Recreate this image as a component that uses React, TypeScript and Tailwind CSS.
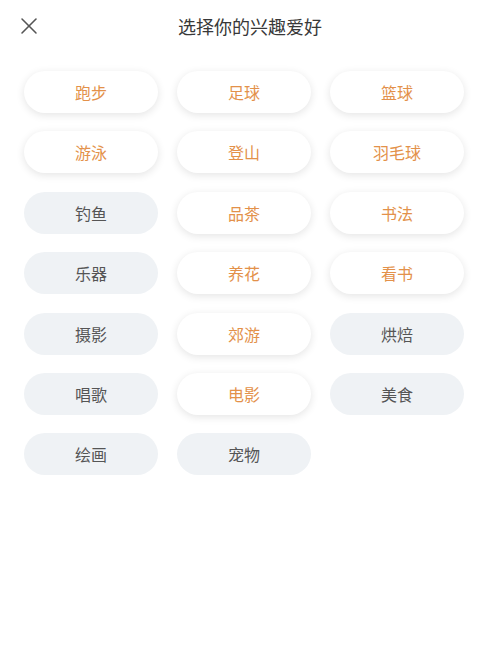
import { X } from 'lucide-react'

type Hobby = { name: string; selected: boolean }

const HOBBIES: Hobby[] = [
  { name: '跑步', selected: true },
  { name: '足球', selected: true },
  { name: '篮球', selected: true },
  { name: '游泳', selected: true },
  { name: '登山', selected: true },
  { name: '羽毛球', selected: true },
  { name: '钓鱼', selected: false },
  { name: '品茶', selected: true },
  { name: '书法', selected: true },
  { name: '乐器', selected: false },
  { name: '养花', selected: true },
  { name: '看书', selected: true },
  { name: '摄影', selected: false },
  { name: '郊游', selected: true },
  { name: '烘焙', selected: false },
  { name: '唱歌', selected: false },
  { name: '电影', selected: true },
  { name: '美食', selected: false },
  { name: '绘画', selected: false },
  { name: '宠物', selected: false },
]

export default function App() {
  return (
    <div
      className="w-[500px] h-[649px] bg-white"
      style={{ fontFamily: '"Noto Sans CJK SC", "Noto Sans", sans-serif' }}
    >
      <div className="relative h-[52px] flex items-center justify-center">
        <button className="absolute left-[15px] top-[12px] text-[#555]">
          <X size={28} strokeWidth={1.3} />
        </button>
        <h1 className="text-[18px] text-[#383838] font-normal">选择你的兴趣爱好</h1>
      </div>

      <div className="grid grid-cols-[134px_134px_134px] gap-x-[19px] gap-y-[18.4px] pl-[24px] pt-[19px]">
        {HOBBIES.map(h => (
          <div
            key={h.name}
            className={
              h.selected
                ? 'h-[42px] rounded-full bg-white flex items-center justify-center text-[16px] text-[#e3914a] shadow-[0_2px_8px_rgba(0,0,0,0.11)]'
                : 'h-[42px] rounded-full bg-[#eff2f5] flex items-center justify-center text-[16px] text-[#555]'
            }
          >
            {h.name}
          </div>
        ))}
      </div>
    </div>
  )
}
